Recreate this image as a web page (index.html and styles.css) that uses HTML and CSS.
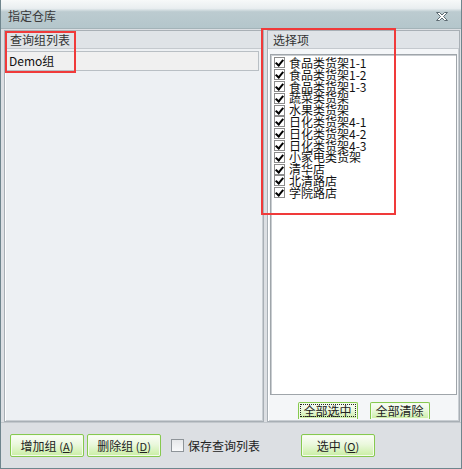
FILE: index.html
```html
<!DOCTYPE html>
<html lang="zh-CN">
<head>
<meta charset="UTF-8">
<title>指定仓库</title>
<link rel="stylesheet" href="styles.css">
</head>
<body>
<div class="window">
  <div class="titlebar">
    <span class="title">指定仓库</span>
    <svg class="close" width="14" height="11" viewBox="0 0 14 11">
      <path d="M1.5 1.5h3l2.5 2.5 2.5-2.5h3l-4 4 4 4h-3l-2.5-2.5-2.5 2.5h-3l4-4z" fill="#fff" stroke="#5d6b72" stroke-width="1"/>
    </svg>
  </div>
  <div class="content">
    <div class="panes">
      <div class="pane pane-left">
        <div class="pane-head">查询组列表</div>
        <div class="group-list">
          <div class="group-row">Demo组</div>
        </div>
      </div>
      <div class="pane pane-right">
        <div class="pane-head">选择项</div>
        <div class="check-list">
          <div class="item"><span class="box"></span>食品类货架1-1</div>
          <div class="item"><span class="box"></span>食品类货架1-2</div>
          <div class="item"><span class="box"></span>食品类货架1-3</div>
          <div class="item"><span class="box"></span>蔬菜类货架</div>
          <div class="item"><span class="box"></span>水果类货架</div>
          <div class="item"><span class="box"></span>日化类货架4-1</div>
          <div class="item"><span class="box"></span>日化类货架4-2</div>
          <div class="item"><span class="box"></span>日化类货架4-3</div>
          <div class="item"><span class="box"></span>小家电类货架</div>
          <div class="item"><span class="box"></span>清华店</div>
          <div class="item"><span class="box"></span>北清路店</div>
          <div class="item"><span class="box"></span>学院路店</div>
        </div>
        <div class="pane-buttons">
          <button class="btn btn-small btn-focus">全部选中</button>
          <button class="btn btn-small">全部清除</button>
        </div>
      </div>
    </div>
    <div class="footer">
      <button class="btn">增加组 <span class="key">(<u>A</u>)</span></button>
      <button class="btn">删除组 <span class="key">(<u>D</u>)</span></button>
      <label class="save"><span class="box-empty"></span>保存查询列表</label>
      <button class="btn btn-ok">选中 <span class="key">(<u>O</u>)</span></button>
    </div>
  </div>
  <div class="mark mark-left"></div>
  <div class="mark mark-right"></div>
</div>
</body>
</html>
```

FILE: styles.css
```css
body {
  margin: 0;
  font-family: "Noto Sans CJK SC", "Liberation Sans", sans-serif;
  font-size: 12px;
  color: #111;
}
.window {
  position: relative;
  width: 462px;
  height: 469px;
  box-sizing: border-box;
  border: 1px solid #6f858d;
  border-top: none;
  display: flex;
  flex-direction: column;
  background: #dcdfe3;
}
.titlebar {
  height: 28px;
  display: flex;
  align-items: center;
  justify-content: space-between;
  padding: 0 12px 0 7px;
  background: linear-gradient(#f7f9f9 0%, #e9eef0 30%, #bccbd0 42%, #b4c6cb 100%);
  border-bottom: 1px solid #a3b3b8;
}
.title {
  color: #3a3a3a;
  font-size: 12px;
  padding-top: 2px;
}
.close {
  margin-top: 4px;
}
.content {
  flex: 1;
  display: flex;
  flex-direction: column;
}
.panes {
  height: 392px;
  display: flex;
  gap: 3px;
  padding: 1px 1px 0 3px;
}
.pane {
  display: flex;
  flex-direction: column;
  border: 1px solid #a8afb5;
  box-shadow: inset 1px 1px 0 #fff, inset -1px -1px 0 #c9ced3;
}
.pane-left {
  width: 258px;
  background: #edf0f3;
}
.pane-right {
  flex: 1;
  background: #f4f6f8;
}
.pane-head {
  height: 17px;
  line-height: 17px;
  padding-left: 5px;
  background: #dfe3e7;
  border-bottom: 1px solid #c4c9ce;
  color: #333;
  font-size: 12px;
}
.group-list {
  padding: 2px 4px 0 2px;
}
.group-row {
  height: 18px;
  line-height: 18px;
  padding-left: 2px;
  background: #f0f0f0;
  border: 1px solid #b9bfc4;
  border-left: none;
}
.check-list {
  height: 341px;
  margin: 5px 2px 0 2px;
  padding-top: 2px;
  box-sizing: border-box;
  background: #fff;
  border: 1px solid #9fa5aa;
  box-shadow: inset 1px 1px 0 #c9cdd1;
}
.item {
  height: 11.8px;
  line-height: 11.8px;
  display: flex;
  align-items: center;
  gap: 4px;
  padding-left: 3px;
  white-space: nowrap;
}
.box {
  position: relative;
  width: 9px;
  height: 9px;
  flex: none;
  border: 1px solid #8c8c8c;
  background: #fff;
}
.box::after {
  content: "";
  position: absolute;
  left: 2px;
  top: 0px;
  width: 3px;
  height: 6px;
  border-right: 2px solid #000;
  border-bottom: 2px solid #000;
  transform: rotate(40deg);
}
.pane-buttons {
  display: flex;
  justify-content: center;
  gap: 12px;
  margin-top: 7px;
}
.btn {
  font-family: inherit;
  font-size: 12px;
  color: #222;
  width: 74px;
  height: 23px;
  padding: 0;
  border: 1px solid #86c94f;
  border-radius: 2px;
  background: linear-gradient(#fbfdf8 0%, #eaf8dc 45%, #c9eea3 100%);
  box-shadow: inset 0 0 0 1px #f4fbec;
}
.btn-small {
  width: 60px;
  height: 17px;
  line-height: 14px;
  border-bottom: none;
  border-radius: 2px 2px 0 0;
}
.btn-focus {
  outline: 1px dotted #222;
  outline-offset: -3px;
}
.key {
  font-size: 11px;
}
.footer {
  flex: 1;
  display: flex;
  align-items: center;
  padding: 0 0 0 9px;
  border-top: 1px solid #c2c7cc;
}
.footer .btn + .btn {
  margin-left: 3px;
}
.save {
  display: flex;
  align-items: center;
  gap: 4px;
  margin-left: 10px;
  color: #222;
}
.box-empty {
  width: 11px;
  height: 11px;
  border: 1px solid #8e9499;
  background: linear-gradient(#e6e8ea, #f8f9fa);
}
.btn-ok {
  margin-left: 41px;
}
.mark {
  position: absolute;
  border: 2px solid #f03a3a;
  box-sizing: border-box;
}
.mark-left {
  left: 4px;
  top: 31px;
  width: 71px;
  height: 42px;
}
.mark-right {
  left: 260px;
  top: 28px;
  width: 135px;
  height: 187px;
}
```
